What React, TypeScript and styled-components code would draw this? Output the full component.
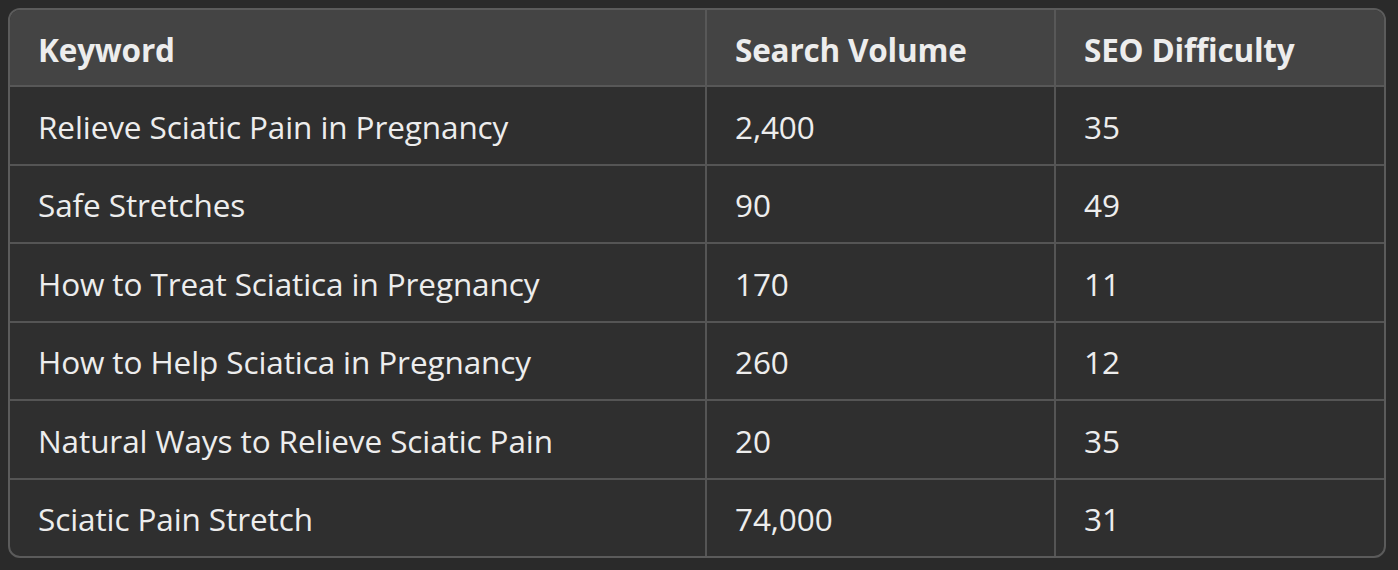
import React from "react";
import styled, { createGlobalStyle } from "styled-components";

const Global = createGlobalStyle`
  html, body { margin: 0; padding: 0; background: #2a2a2a; }
  body { padding: 8px; font-family: "Open Sans", "Noto Sans", sans-serif; }
`;

const Wrap = styled.div`
  width: 1378px;
  border: 2px solid #5b5b5b;
  border-radius: 12px;
  overflow: hidden;
  box-sizing: border-box;
  background: #2f2f2f;
`;

const Table = styled.table`
  width: 100%;
  border-collapse: collapse;
  table-layout: fixed;
  color: #ededed;
`;

const Col = styled.col<{ $w: number }>`
  width: ${(p) => p.$w}px;
`;

const Th = styled.th`
  background: #444444;
  height: 72px;
  padding: 3px 28px 0;
  text-align: left;
  font-weight: 700;
  font-size: 31.5px;
  letter-spacing: -0.2px;
  border-bottom: 2px solid #585858;
  border-left: 2px solid #585858;
  &:first-child { border-left: none; }
`;

const Td = styled.td`
  height: 75px;
  padding: 1.5px 28px 0;
  font-size: 31.5px;
  font-weight: 400;
  letter-spacing: -0.1px;
  border-bottom: 2px solid #555555;
  border-left: 2px solid #555555;
  &:first-child { border-left: none; }
  tr:last-child & { border-bottom: none; }
`;

const rows: [string, string, string][] = [
  ["Relieve Sciatic Pain in Pregnancy", "2,400", "35"],
  ["Safe Stretches", "90", "49"],
  ["How to Treat Sciatica in Pregnancy", "170", "11"],
  ["How to Help Sciatica in Pregnancy", "260", "12"],
  ["Natural Ways to Relieve Sciatic Pain", "20", "35"],
  ["Sciatic Pain Stretch", "74,000", "31"],
];

export default function App() {
  return (
    <>
      <Global />
      <Wrap>
        <Table>
          <colgroup>
            <Col $w={696} />
            <Col $w={349} />
            <Col $w={329} />
          </colgroup>
          <thead>
            <tr>
              <Th>Keyword</Th>
              <Th>Search Volume</Th>
              <Th>SEO Difficulty</Th>
            </tr>
          </thead>
          <tbody>
            {rows.map((r) => (
              <tr key={r[0]}>
                <Td>{r[0]}</Td>
                <Td>{r[1]}</Td>
                <Td>{r[2]}</Td>
              </tr>
            ))}
          </tbody>
        </Table>
      </Wrap>
    </>
  );
}
